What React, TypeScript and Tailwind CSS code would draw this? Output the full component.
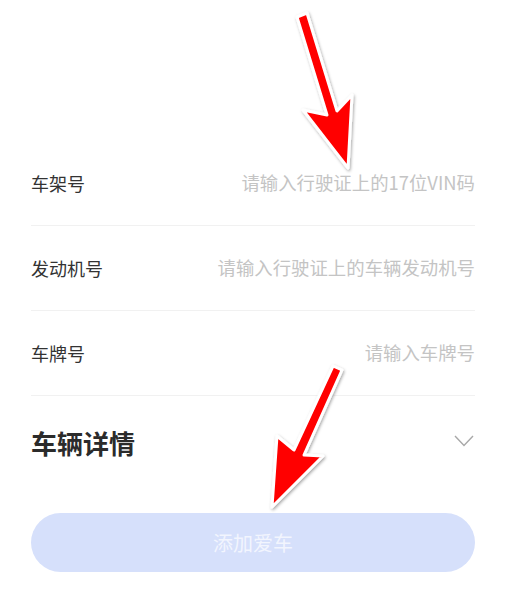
const fields = [
  { label: '车架号', placeholder: '请输入行驶证上的17位VIN码' },
  { label: '发动机号', placeholder: '请输入行驶证上的车辆发动机号' },
  { label: '车牌号', placeholder: '请输入车牌号' },
];

// Red annotation arrows drawn over the page
function Arrows() {
  return (
    <svg className="pointer-events-none absolute left-0 top-0" width="506" height="594" viewBox="0 0 506 594">
      <defs>
        <filter id="shadow" x="-20%" y="-20%" width="140%" height="140%">
          <feDropShadow dx="1" dy="1.5" stdDeviation="1.5" floodColor="#000" floodOpacity="0.35" />
        </filter>
      </defs>
      <polygon
        points="297,17 327,115 303,110 348,168 352,95 337,111 307,13"
        fill="#ff0000"
        stroke="#ffffff"
        strokeWidth="3"
        strokeLinejoin="round"
        filter="url(#shadow)"
      />
      <polygon
        points="333,366 294,450 277,436 272,507 323,456 304,455 342,370"
        fill="#ff0000"
        stroke="#ffffff"
        strokeWidth="3"
        strokeLinejoin="round"
        filter="url(#shadow)"
      />
    </svg>
  );
}

export default function App() {
  return (
    <div className="relative h-[594px] w-[506px] overflow-hidden bg-white font-['Noto_Sans_CJK_SC','Noto_Sans',sans-serif]">
      <div className="px-[31px] pt-[141px]">
        {fields.map((f) => (
          <div key={f.label} className="flex h-[85px] items-center justify-between border-b border-[#f1f1f1]">
            <span className="text-[18px] text-[#333333]">{f.label}</span>
            <span className="text-[18.4px] text-[#c4c4c4]">{f.placeholder}</span>
          </div>
        ))}

        <div className="flex h-[92px] items-center justify-between">
          <span className="text-[26px] font-bold text-[#2b2b2b]">车辆详情</span>
          <svg width="20" height="12" viewBox="0 0 20 12" className="mr-[1px] mb-[2px]">
            <polyline points="1,1 10,10.5 19,1" fill="none" stroke="#a8a8a8" strokeWidth="1.4" />
          </svg>
        </div>

        <button
          type="button"
          className="mt-[25px] flex h-[59px] w-full items-center justify-center rounded-full bg-[#d6e0fb] text-[20px] text-[#f2f5fe]"
        >
          添加爱车
        </button>
      </div>
      <Arrows />
    </div>
  );
}
